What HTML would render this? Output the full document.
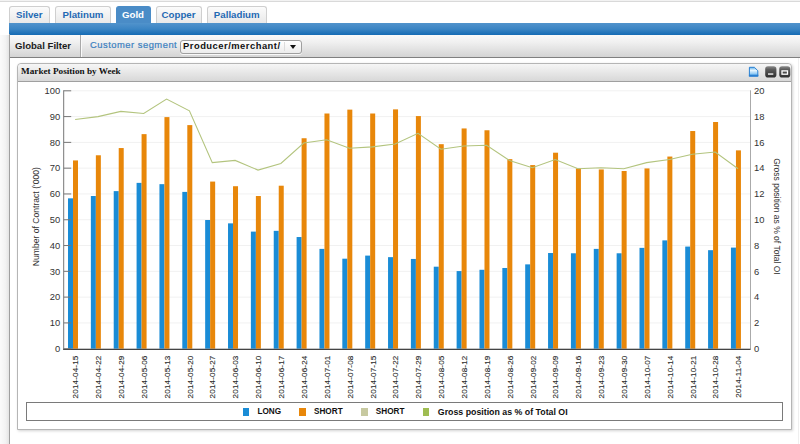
<!DOCTYPE html>
<html><head><meta charset="utf-8">
<style>
html,body{margin:0;padding:0;}
body{width:800px;height:444px;overflow:hidden;position:relative;background:#fff;font-family:"Liberation Sans",sans-serif;}
.a{position:absolute;}
.topline{left:0;top:0;width:800px;height:1px;background:#f2f2f2;border-bottom:1px solid #d9d9d9;}
.tab{position:absolute;top:6px;height:17px;border:1px solid #cfcfcf;border-bottom:none;border-radius:3px 3px 0 0;background:linear-gradient(#fbfbfb,#e9e9e9);color:#1f69b3;font-weight:bold;font-size:9.7px;line-height:15px;text-align:center;box-sizing:border-box;}
.tab.on{background:#4a8cc7;border-color:#4a8cc7;color:#fff;}
.bluebar{left:9px;top:23px;width:791px;height:11.5px;background:linear-gradient(#5193cc,#3b85c4 50%,#156bb4);}
.filter{left:9px;top:34.5px;width:791px;height:22px;background:linear-gradient(#fafafa,#efefef 35%,#d4d4d4);border-bottom:1px solid #808080;}
.leftline{left:9px;top:34px;width:1px;height:410px;background:#a0a0a0;}
.leftshade{left:0;top:35px;width:9px;height:409px;background:linear-gradient(to right,#fbfbfb,#f3f3f3 60%,#e4e4e4);}
.panel{left:16.5px;top:63px;width:775px;height:366.5px;border:1px solid #b5b5b5;border-radius:4px 4px 0 0;box-sizing:border-box;background:#fff;box-shadow:1px 1px 3px rgba(0,0,0,0.18);}
.phead{left:0;top:0;width:773px;height:17px;border-radius:4px 4px 0 0;background:linear-gradient(#f6f6f6,#eaeaea 40%,#d8d8d8);border-bottom:1px solid #a0a0a0;}
.legend{left:25.5px;top:402px;width:757.5px;height:18.5px;border:1px solid #7a7a7a;box-sizing:border-box;background:#fff;}
.sw{position:absolute;top:407.7px;width:6.6px;height:8px;}
.lt{position:absolute;top:407px;font-weight:bold;font-size:8.2px;color:#111;line-height:10px;white-space:nowrap;}
</style></head><body>
<div class="a topline"></div>
<div class="tab" style="left:9px;width:40.5px;">Silver</div>
<div class="tab" style="left:55px;width:56px;">Platinum</div>
<div class="tab on" style="left:115.5px;width:35px;">Gold</div>
<div class="tab" style="left:155.5px;width:46px;">Copper</div>
<div class="tab" style="left:207px;width:59.5px;">Palladium</div>
<div class="a bluebar"></div>
<div class="a filter"></div>
<div class="a" style="left:15px;top:40px;font-weight:bold;font-size:9.6px;line-height:12px;color:#1c1c1c;white-space:nowrap;">Global Filter</div>
<div class="a" style="left:80px;top:35px;width:1px;height:21.5px;background:#a9a9a9;"></div>
<div class="a" style="left:81px;top:35px;width:1px;height:21.5px;background:#fafafa;"></div>
<div class="a" style="left:90px;top:39px;font-size:9.4px;letter-spacing:0.5px;-webkit-text-stroke:0.2px #3a7fc0;line-height:12px;color:#3a7fc0;white-space:nowrap;">Customer segment</div>
<div class="a" style="left:179.5px;top:39.5px;width:122.5px;height:14px;box-sizing:border-box;border:1px solid #9f9f9f;border-radius:3px;background:linear-gradient(#ffffff,#ececec);box-shadow:0 1px 0 rgba(255,255,255,0.8);"></div>
<div class="a" style="left:183px;top:40px;font-weight:bold;font-size:9.4px;letter-spacing:0.5px;line-height:12px;color:#111;white-space:nowrap;">Producer/merchant/</div>
<div class="a" style="left:284px;top:41.5px;width:1px;height:9px;background:#dcdcdc;"></div>
<div class="a" style="left:290px;top:44.5px;width:0;height:0;border-left:3.5px solid transparent;border-right:3.5px solid transparent;border-top:4px solid #111;"></div>
<div class="a leftshade"></div>
<div class="a leftline"></div>
<div class="a" style="left:798px;top:58px;width:1px;height:386px;background:#efefef;"></div>
<div class="a panel">
  <div class="a phead"></div>
  <div class="a" style="left:3.6px;top:2.1px;font-family:'Liberation Serif',serif;font-weight:bold;font-size:9.2px;line-height:10px;color:#111;white-space:nowrap;">Market Position by Week</div>
  <svg class="a" style="left:729px;top:2.2px;" width="46" height="13" viewBox="0 0 46 13">
    <defs>
      <linearGradient id="doc" x1="0" y1="0" x2="0" y2="1"><stop offset="0" stop-color="#5aaeea"/><stop offset="0.35" stop-color="#e9f6fe"/><stop offset="1" stop-color="#58aef0"/></linearGradient>
      <linearGradient id="btn" x1="0" y1="0" x2="0" y2="1"><stop offset="0" stop-color="#8a8a8a"/><stop offset="0.3" stop-color="#5a5a5a"/><stop offset="1" stop-color="#2e2e2e"/></linearGradient>
    </defs>
    <path d="M2.4,1.3 H7.4 L10.8,4.7 V10.1 H2.4 Z" fill="url(#doc)" stroke="#2b80d2" stroke-width="1"/>
    <rect x="1.9" y="8.7" width="9.4" height="1.9" fill="#2b80d2"/>
    <rect x="18.2" y="0.2" width="11.2" height="11.3" rx="2.8" fill="url(#btn)"/>
    <rect x="21" y="7.4" width="5.3" height="1.3" fill="#fff"/>
    <rect x="32.25" y="0.2" width="11" height="11.3" rx="2.8" fill="url(#btn)"/>
    <rect x="35" y="4.9" width="5.5" height="3.3" fill="none" stroke="#fff" stroke-width="1.3"/>
  </svg>
</div>
<svg width="800" height="444" viewBox="0 0 800 444" style="position:absolute;left:0;top:0">
<line x1="63.7" y1="348.70" x2="750.5" y2="348.70" stroke="#f1f1f1" stroke-width="1"/>
<line x1="63.7" y1="322.91" x2="750.5" y2="322.91" stroke="#f1f1f1" stroke-width="1"/>
<line x1="63.7" y1="297.12" x2="750.5" y2="297.12" stroke="#f1f1f1" stroke-width="1"/>
<line x1="63.7" y1="271.33" x2="750.5" y2="271.33" stroke="#f1f1f1" stroke-width="1"/>
<line x1="63.7" y1="245.54" x2="750.5" y2="245.54" stroke="#f1f1f1" stroke-width="1"/>
<line x1="63.7" y1="219.75" x2="750.5" y2="219.75" stroke="#f1f1f1" stroke-width="1"/>
<line x1="63.7" y1="193.96" x2="750.5" y2="193.96" stroke="#f1f1f1" stroke-width="1"/>
<line x1="63.7" y1="168.17" x2="750.5" y2="168.17" stroke="#f1f1f1" stroke-width="1"/>
<line x1="63.7" y1="142.38" x2="750.5" y2="142.38" stroke="#f1f1f1" stroke-width="1"/>
<line x1="63.7" y1="116.59" x2="750.5" y2="116.59" stroke="#f1f1f1" stroke-width="1"/>
<line x1="63.7" y1="90.80" x2="750.5" y2="90.80" stroke="#f1f1f1" stroke-width="1"/>
<rect x="68.00" y="198.34" width="5.0" height="150.36" fill="#1a8cd6"/>
<rect x="73.00" y="160.43" width="5.0" height="188.27" fill="#e8870a"/>
<rect x="90.86" y="196.02" width="5.0" height="152.68" fill="#1a8cd6"/>
<rect x="95.86" y="155.27" width="5.0" height="193.43" fill="#e8870a"/>
<rect x="113.72" y="191.12" width="5.0" height="157.58" fill="#1a8cd6"/>
<rect x="118.72" y="148.05" width="5.0" height="200.65" fill="#e8870a"/>
<rect x="136.58" y="182.87" width="5.0" height="165.83" fill="#1a8cd6"/>
<rect x="141.58" y="134.13" width="5.0" height="214.57" fill="#e8870a"/>
<rect x="159.44" y="184.16" width="5.0" height="164.54" fill="#1a8cd6"/>
<rect x="164.44" y="117.11" width="5.0" height="231.59" fill="#e8870a"/>
<rect x="182.30" y="191.90" width="5.0" height="156.80" fill="#1a8cd6"/>
<rect x="187.30" y="125.10" width="5.0" height="223.60" fill="#e8870a"/>
<rect x="205.16" y="220.01" width="5.0" height="128.69" fill="#1a8cd6"/>
<rect x="210.16" y="181.58" width="5.0" height="167.12" fill="#e8870a"/>
<rect x="228.02" y="223.36" width="5.0" height="125.34" fill="#1a8cd6"/>
<rect x="233.02" y="186.22" width="5.0" height="162.48" fill="#e8870a"/>
<rect x="250.88" y="231.61" width="5.0" height="117.09" fill="#1a8cd6"/>
<rect x="255.88" y="196.02" width="5.0" height="152.68" fill="#e8870a"/>
<rect x="273.74" y="230.84" width="5.0" height="117.86" fill="#1a8cd6"/>
<rect x="278.74" y="185.71" width="5.0" height="162.99" fill="#e8870a"/>
<rect x="296.60" y="237.03" width="5.0" height="111.67" fill="#1a8cd6"/>
<rect x="301.60" y="138.25" width="5.0" height="210.45" fill="#e8870a"/>
<rect x="319.46" y="248.89" width="5.0" height="99.81" fill="#1a8cd6"/>
<rect x="324.46" y="113.50" width="5.0" height="235.20" fill="#e8870a"/>
<rect x="342.32" y="258.69" width="5.0" height="90.01" fill="#1a8cd6"/>
<rect x="347.32" y="109.63" width="5.0" height="239.07" fill="#e8870a"/>
<rect x="365.18" y="255.60" width="5.0" height="93.10" fill="#1a8cd6"/>
<rect x="370.18" y="113.50" width="5.0" height="235.20" fill="#e8870a"/>
<rect x="388.04" y="257.15" width="5.0" height="91.55" fill="#1a8cd6"/>
<rect x="393.04" y="109.37" width="5.0" height="239.33" fill="#e8870a"/>
<rect x="410.90" y="258.95" width="5.0" height="89.75" fill="#1a8cd6"/>
<rect x="415.90" y="116.07" width="5.0" height="232.63" fill="#e8870a"/>
<rect x="433.76" y="266.69" width="5.0" height="82.01" fill="#1a8cd6"/>
<rect x="438.76" y="144.19" width="5.0" height="204.51" fill="#e8870a"/>
<rect x="456.62" y="271.07" width="5.0" height="77.63" fill="#1a8cd6"/>
<rect x="461.62" y="128.45" width="5.0" height="220.25" fill="#e8870a"/>
<rect x="479.48" y="269.78" width="5.0" height="78.92" fill="#1a8cd6"/>
<rect x="484.48" y="130.26" width="5.0" height="218.44" fill="#e8870a"/>
<rect x="502.34" y="267.98" width="5.0" height="80.72" fill="#1a8cd6"/>
<rect x="507.34" y="159.14" width="5.0" height="189.56" fill="#e8870a"/>
<rect x="525.20" y="264.37" width="5.0" height="84.33" fill="#1a8cd6"/>
<rect x="530.20" y="165.08" width="5.0" height="183.62" fill="#e8870a"/>
<rect x="548.06" y="253.02" width="5.0" height="95.68" fill="#1a8cd6"/>
<rect x="553.06" y="152.70" width="5.0" height="196.00" fill="#e8870a"/>
<rect x="570.92" y="253.28" width="5.0" height="95.42" fill="#1a8cd6"/>
<rect x="575.92" y="168.43" width="5.0" height="180.27" fill="#e8870a"/>
<rect x="593.78" y="248.89" width="5.0" height="99.81" fill="#1a8cd6"/>
<rect x="598.78" y="169.46" width="5.0" height="179.24" fill="#e8870a"/>
<rect x="616.64" y="253.28" width="5.0" height="95.42" fill="#1a8cd6"/>
<rect x="621.64" y="171.01" width="5.0" height="177.69" fill="#e8870a"/>
<rect x="639.50" y="247.86" width="5.0" height="100.84" fill="#1a8cd6"/>
<rect x="644.50" y="168.43" width="5.0" height="180.27" fill="#e8870a"/>
<rect x="662.36" y="240.38" width="5.0" height="108.32" fill="#1a8cd6"/>
<rect x="667.36" y="156.56" width="5.0" height="192.14" fill="#e8870a"/>
<rect x="685.22" y="246.57" width="5.0" height="102.13" fill="#1a8cd6"/>
<rect x="690.22" y="131.03" width="5.0" height="217.67" fill="#e8870a"/>
<rect x="708.08" y="250.18" width="5.0" height="98.52" fill="#1a8cd6"/>
<rect x="713.08" y="122.01" width="5.0" height="226.69" fill="#e8870a"/>
<rect x="730.94" y="247.60" width="5.0" height="101.10" fill="#1a8cd6"/>
<rect x="735.94" y="150.37" width="5.0" height="198.33" fill="#e8870a"/>
<polyline points="75.13,119.43 97.99,116.59 120.85,111.43 143.71,113.50 166.57,99.05 189.43,110.79 212.29,162.63 235.15,160.43 258.01,170.10 280.87,163.53 303.73,143.02 326.59,139.80 349.45,148.18 372.31,146.89 395.17,144.06 418.03,133.35 440.89,149.21 463.75,145.99 486.61,145.22 509.47,160.43 532.33,167.78 555.19,159.53 578.05,168.81 600.91,167.78 623.77,168.81 646.63,162.63 669.49,159.53 692.35,154.24 715.21,152.05 738.07,168.81" fill="none" stroke="#b3c47e" stroke-width="1.1"/>
<line x1="63.7" y1="90.3" x2="63.7" y2="349.5" stroke="#777" stroke-width="1"/>
<line x1="750.5" y1="90.3" x2="750.5" y2="349.5" stroke="#aaa" stroke-width="1"/>
<line x1="63.2" y1="349.3" x2="750.5" y2="349.3" stroke="#444" stroke-width="1.2"/>
<line x1="63.7" y1="348.70" x2="71.2" y2="348.70" stroke="#777" stroke-width="1"/>
<line x1="63.7" y1="322.91" x2="71.2" y2="322.91" stroke="#777" stroke-width="1"/>
<line x1="63.7" y1="297.12" x2="71.2" y2="297.12" stroke="#777" stroke-width="1"/>
<line x1="63.7" y1="271.33" x2="71.2" y2="271.33" stroke="#777" stroke-width="1"/>
<line x1="63.7" y1="245.54" x2="71.2" y2="245.54" stroke="#777" stroke-width="1"/>
<line x1="63.7" y1="219.75" x2="71.2" y2="219.75" stroke="#777" stroke-width="1"/>
<line x1="63.7" y1="193.96" x2="71.2" y2="193.96" stroke="#777" stroke-width="1"/>
<line x1="63.7" y1="168.17" x2="71.2" y2="168.17" stroke="#777" stroke-width="1"/>
<line x1="63.7" y1="142.38" x2="71.2" y2="142.38" stroke="#777" stroke-width="1"/>
<line x1="63.7" y1="116.59" x2="71.2" y2="116.59" stroke="#777" stroke-width="1"/>
<line x1="63.7" y1="90.80" x2="71.2" y2="90.80" stroke="#777" stroke-width="1"/>
<text x="60.2" y="352.00" text-anchor="end" font-family="Liberation Sans" font-size="9.4" fill="#333">0</text>
<text x="60.2" y="326.21" text-anchor="end" font-family="Liberation Sans" font-size="9.4" fill="#333">10</text>
<text x="60.2" y="300.42" text-anchor="end" font-family="Liberation Sans" font-size="9.4" fill="#333">20</text>
<text x="60.2" y="274.63" text-anchor="end" font-family="Liberation Sans" font-size="9.4" fill="#333">30</text>
<text x="60.2" y="248.84" text-anchor="end" font-family="Liberation Sans" font-size="9.4" fill="#333">40</text>
<text x="60.2" y="223.05" text-anchor="end" font-family="Liberation Sans" font-size="9.4" fill="#333">50</text>
<text x="60.2" y="197.26" text-anchor="end" font-family="Liberation Sans" font-size="9.4" fill="#333">60</text>
<text x="60.2" y="171.47" text-anchor="end" font-family="Liberation Sans" font-size="9.4" fill="#333">70</text>
<text x="60.2" y="145.68" text-anchor="end" font-family="Liberation Sans" font-size="9.4" fill="#333">80</text>
<text x="60.2" y="119.89" text-anchor="end" font-family="Liberation Sans" font-size="9.4" fill="#333">90</text>
<text x="60.2" y="94.10" text-anchor="end" font-family="Liberation Sans" font-size="9.4" fill="#333">100</text>
<text x="754" y="352.00" font-family="Liberation Sans" font-size="9.4" fill="#333">0</text>
<text x="754" y="326.21" font-family="Liberation Sans" font-size="9.4" fill="#333">2</text>
<text x="754" y="300.42" font-family="Liberation Sans" font-size="9.4" fill="#333">4</text>
<text x="754" y="274.63" font-family="Liberation Sans" font-size="9.4" fill="#333">6</text>
<text x="754" y="248.84" font-family="Liberation Sans" font-size="9.4" fill="#333">8</text>
<text x="754" y="223.05" font-family="Liberation Sans" font-size="9.4" fill="#333">10</text>
<text x="754" y="197.26" font-family="Liberation Sans" font-size="9.4" fill="#333">12</text>
<text x="754" y="171.47" font-family="Liberation Sans" font-size="9.4" fill="#333">14</text>
<text x="754" y="145.68" font-family="Liberation Sans" font-size="9.4" fill="#333">16</text>
<text x="754" y="119.89" font-family="Liberation Sans" font-size="9.4" fill="#333">18</text>
<text x="754" y="94.10" font-family="Liberation Sans" font-size="9.4" fill="#333">20</text>
<text transform="translate(39.2,216.7) rotate(-90)" text-anchor="middle" font-family="Liberation Sans" font-size="8.6" fill="#333">Number of Contract ('000)</text>
<text transform="translate(774.0,216.4) rotate(90)" text-anchor="middle" font-family="Liberation Sans" font-size="8.5" fill="#333">Gross position as % of Total OI</text>
<text transform="translate(78.33,355.5) rotate(-90)" text-anchor="end" font-family="Liberation Sans" font-size="8.1" letter-spacing="0.15" fill="#2a2a2a" stroke="#2a2a2a" stroke-width="0.12">2014-04-15</text>
<text transform="translate(101.19,355.5) rotate(-90)" text-anchor="end" font-family="Liberation Sans" font-size="8.1" letter-spacing="0.15" fill="#2a2a2a" stroke="#2a2a2a" stroke-width="0.12">2014-04-22</text>
<text transform="translate(124.05,355.5) rotate(-90)" text-anchor="end" font-family="Liberation Sans" font-size="8.1" letter-spacing="0.15" fill="#2a2a2a" stroke="#2a2a2a" stroke-width="0.12">2014-04-29</text>
<text transform="translate(146.91,355.5) rotate(-90)" text-anchor="end" font-family="Liberation Sans" font-size="8.1" letter-spacing="0.15" fill="#2a2a2a" stroke="#2a2a2a" stroke-width="0.12">2014-05-06</text>
<text transform="translate(169.77,355.5) rotate(-90)" text-anchor="end" font-family="Liberation Sans" font-size="8.1" letter-spacing="0.15" fill="#2a2a2a" stroke="#2a2a2a" stroke-width="0.12">2014-05-13</text>
<text transform="translate(192.63,355.5) rotate(-90)" text-anchor="end" font-family="Liberation Sans" font-size="8.1" letter-spacing="0.15" fill="#2a2a2a" stroke="#2a2a2a" stroke-width="0.12">2014-05-20</text>
<text transform="translate(215.49,355.5) rotate(-90)" text-anchor="end" font-family="Liberation Sans" font-size="8.1" letter-spacing="0.15" fill="#2a2a2a" stroke="#2a2a2a" stroke-width="0.12">2014-05-27</text>
<text transform="translate(238.35,355.5) rotate(-90)" text-anchor="end" font-family="Liberation Sans" font-size="8.1" letter-spacing="0.15" fill="#2a2a2a" stroke="#2a2a2a" stroke-width="0.12">2014-06-03</text>
<text transform="translate(261.21,355.5) rotate(-90)" text-anchor="end" font-family="Liberation Sans" font-size="8.1" letter-spacing="0.15" fill="#2a2a2a" stroke="#2a2a2a" stroke-width="0.12">2014-06-10</text>
<text transform="translate(284.07,355.5) rotate(-90)" text-anchor="end" font-family="Liberation Sans" font-size="8.1" letter-spacing="0.15" fill="#2a2a2a" stroke="#2a2a2a" stroke-width="0.12">2014-06-17</text>
<text transform="translate(306.93,355.5) rotate(-90)" text-anchor="end" font-family="Liberation Sans" font-size="8.1" letter-spacing="0.15" fill="#2a2a2a" stroke="#2a2a2a" stroke-width="0.12">2014-06-24</text>
<text transform="translate(329.79,355.5) rotate(-90)" text-anchor="end" font-family="Liberation Sans" font-size="8.1" letter-spacing="0.15" fill="#2a2a2a" stroke="#2a2a2a" stroke-width="0.12">2014-07-01</text>
<text transform="translate(352.65,355.5) rotate(-90)" text-anchor="end" font-family="Liberation Sans" font-size="8.1" letter-spacing="0.15" fill="#2a2a2a" stroke="#2a2a2a" stroke-width="0.12">2014-07-08</text>
<text transform="translate(375.51,355.5) rotate(-90)" text-anchor="end" font-family="Liberation Sans" font-size="8.1" letter-spacing="0.15" fill="#2a2a2a" stroke="#2a2a2a" stroke-width="0.12">2014-07-15</text>
<text transform="translate(398.37,355.5) rotate(-90)" text-anchor="end" font-family="Liberation Sans" font-size="8.1" letter-spacing="0.15" fill="#2a2a2a" stroke="#2a2a2a" stroke-width="0.12">2014-07-22</text>
<text transform="translate(421.23,355.5) rotate(-90)" text-anchor="end" font-family="Liberation Sans" font-size="8.1" letter-spacing="0.15" fill="#2a2a2a" stroke="#2a2a2a" stroke-width="0.12">2014-07-29</text>
<text transform="translate(444.09,355.5) rotate(-90)" text-anchor="end" font-family="Liberation Sans" font-size="8.1" letter-spacing="0.15" fill="#2a2a2a" stroke="#2a2a2a" stroke-width="0.12">2014-08-05</text>
<text transform="translate(466.95,355.5) rotate(-90)" text-anchor="end" font-family="Liberation Sans" font-size="8.1" letter-spacing="0.15" fill="#2a2a2a" stroke="#2a2a2a" stroke-width="0.12">2014-08-12</text>
<text transform="translate(489.81,355.5) rotate(-90)" text-anchor="end" font-family="Liberation Sans" font-size="8.1" letter-spacing="0.15" fill="#2a2a2a" stroke="#2a2a2a" stroke-width="0.12">2014-08-19</text>
<text transform="translate(512.67,355.5) rotate(-90)" text-anchor="end" font-family="Liberation Sans" font-size="8.1" letter-spacing="0.15" fill="#2a2a2a" stroke="#2a2a2a" stroke-width="0.12">2014-08-26</text>
<text transform="translate(535.53,355.5) rotate(-90)" text-anchor="end" font-family="Liberation Sans" font-size="8.1" letter-spacing="0.15" fill="#2a2a2a" stroke="#2a2a2a" stroke-width="0.12">2014-09-02</text>
<text transform="translate(558.39,355.5) rotate(-90)" text-anchor="end" font-family="Liberation Sans" font-size="8.1" letter-spacing="0.15" fill="#2a2a2a" stroke="#2a2a2a" stroke-width="0.12">2014-09-09</text>
<text transform="translate(581.25,355.5) rotate(-90)" text-anchor="end" font-family="Liberation Sans" font-size="8.1" letter-spacing="0.15" fill="#2a2a2a" stroke="#2a2a2a" stroke-width="0.12">2014-09-16</text>
<text transform="translate(604.11,355.5) rotate(-90)" text-anchor="end" font-family="Liberation Sans" font-size="8.1" letter-spacing="0.15" fill="#2a2a2a" stroke="#2a2a2a" stroke-width="0.12">2014-09-23</text>
<text transform="translate(626.97,355.5) rotate(-90)" text-anchor="end" font-family="Liberation Sans" font-size="8.1" letter-spacing="0.15" fill="#2a2a2a" stroke="#2a2a2a" stroke-width="0.12">2014-09-30</text>
<text transform="translate(649.83,355.5) rotate(-90)" text-anchor="end" font-family="Liberation Sans" font-size="8.1" letter-spacing="0.15" fill="#2a2a2a" stroke="#2a2a2a" stroke-width="0.12">2014-10-07</text>
<text transform="translate(672.69,355.5) rotate(-90)" text-anchor="end" font-family="Liberation Sans" font-size="8.1" letter-spacing="0.15" fill="#2a2a2a" stroke="#2a2a2a" stroke-width="0.12">2014-10-14</text>
<text transform="translate(695.55,355.5) rotate(-90)" text-anchor="end" font-family="Liberation Sans" font-size="8.1" letter-spacing="0.15" fill="#2a2a2a" stroke="#2a2a2a" stroke-width="0.12">2014-10-21</text>
<text transform="translate(718.41,355.5) rotate(-90)" text-anchor="end" font-family="Liberation Sans" font-size="8.1" letter-spacing="0.15" fill="#2a2a2a" stroke="#2a2a2a" stroke-width="0.12">2014-10-28</text>
<text transform="translate(741.27,355.5) rotate(-90)" text-anchor="end" font-family="Liberation Sans" font-size="8.1" letter-spacing="0.15" fill="#2a2a2a" stroke="#2a2a2a" stroke-width="0.12">2014-11-04</text>
</svg>
<div class="a legend"></div>
<div class="sw" style="left:242.5px;background:#1a8cd6;"></div>
<div class="lt" style="left:257.5px;">LONG</div>
<div class="sw" style="left:299px;background:#e8870a;"></div>
<div class="lt" style="left:314px;">SHORT</div>
<div class="sw" style="left:361px;background:#c7c9a0;"></div>
<div class="lt" style="left:375.8px;">SHORT</div>
<div class="sw" style="left:422.5px;background:#9fbd52;"></div>
<div class="lt" style="left:437.8px;font-size:8.8px;top:406.6px;">Gross position as % of Total OI</div>
</body></html>
